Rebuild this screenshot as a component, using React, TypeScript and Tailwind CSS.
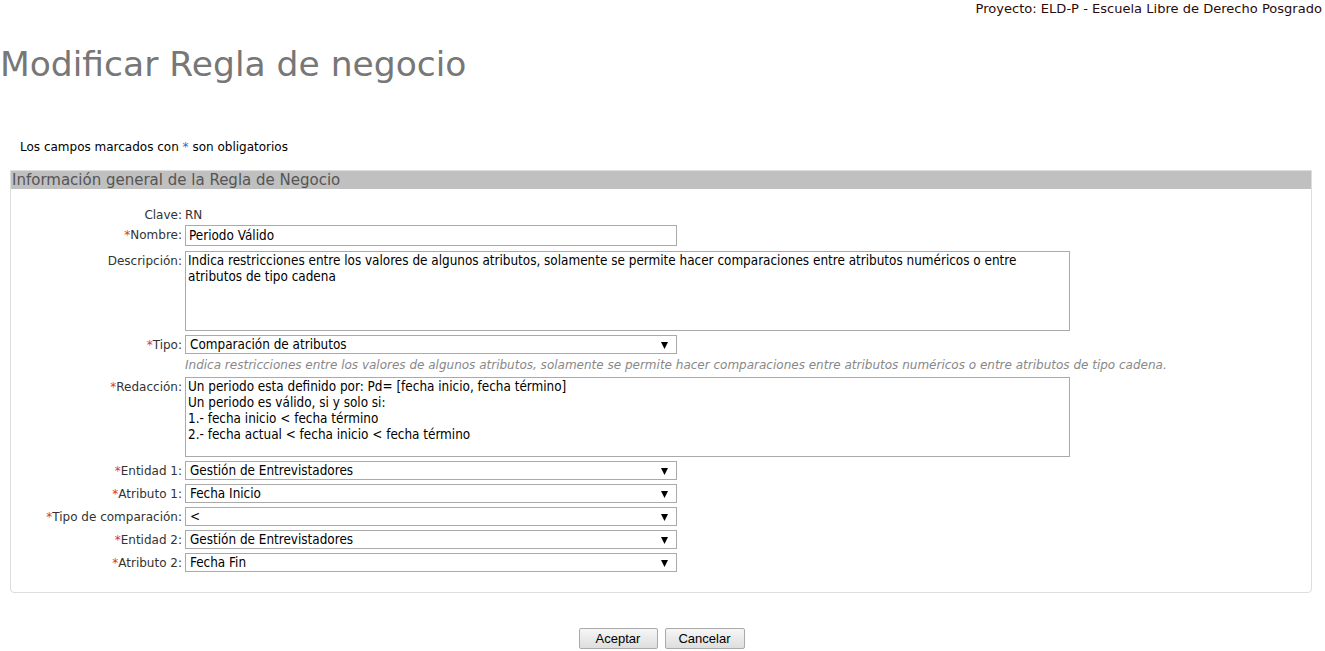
const LABEL_FONT = "font-['Verdana','DejaVu_Sans',sans-serif]";
const FIELD_FONT = "font-['DejaVu_Sans_Condensed','DejaVu_Sans',sans-serif]";

function Label({ text, required }: { text: string; required?: boolean }) {
  return (
    <div className="w-[171px] shrink-0 text-right text-[12px] leading-[16px] text-[#333] pt-[2px]">
      {required && <span className="text-[#d33]">*</span>}
      {text}:
    </div>
  );
}

function Row({ label, required, children, className = "" }: { label: string; required?: boolean; children: React.ReactNode; className?: string }) {
  return (
    <div className={`flex items-start gap-[3px] ${className}`}>
      <Label text={label} required={required} />
      <div className="flex-1">{children}</div>
    </div>
  );
}

function Select({ value }: { value: string }) {
  return (
    <div className={`relative w-[492px] h-[19px] border border-[#aaa] bg-white ${FIELD_FONT} text-[13.4px] leading-[17px] text-black pl-[4px]`}>
      {value}
      <svg className="absolute right-[8px] top-[6px]" width="7" height="7" viewBox="0 0 7 7" aria-hidden="true">
        <path d="M0 0h7L3.5 7z" fill="#000" />
      </svg>
    </div>
  );
}

function TextArea({ lines }: { lines: string[] }) {
  return (
    <div className={`w-[885px] h-[80px] border border-[#aaa] bg-white ${FIELD_FONT} text-[13.4px] leading-[16px] text-black px-[2px] pt-[1px]`}>
      {lines.map((l) => (
        <div key={l}>{l}</div>
      ))}
    </div>
  );
}

export default function App() {
  return (
    <div className={`w-[1325px] h-[651px] bg-white ${LABEL_FONT} overflow-hidden`}>
      <div className="text-right text-[13.05px] leading-[16px] text-[#2a0a0a] pt-[1px] pr-[3px]">
        Proyecto: ELD-P - Escuela Libre de Derecho Posgrado
      </div>
      <h1 className="text-[34.5px] leading-[44px] text-[#777] mt-[25px]">Modificar Regla de negocio</h1>
      <p className="text-[12px] leading-[16px] text-black ml-[20px] mt-[53px]">
        Los campos marcados con <span className="text-[#36c]">*</span> son obligatorios
      </p>
      <div className="mx-[10px] w-[1302px] mt-[15px] border border-[#ddd] rounded-b-[4px] pb-[20px]">
        <div className="bg-[#c0c0c0] h-[18px] text-[15px] leading-[18px] text-[#555] pl-[1px]">
          Información general de la Regla de Negocio
        </div>
        <div className="pt-[16px]">
          <Row label="Clave">
            <div className="text-[12px] leading-[16px] text-[#333] pt-[2px]">RN</div>
          </Row>
          <Row label="Nombre" required className="mt-[2px]">
            <div className={`w-[492px] h-[21px] border border-[#aaa] ${FIELD_FONT} text-[13.4px] leading-[19px] text-black pl-[3px]`}>
              Periodo Válido
            </div>
          </Row>
          <Row label="Descripción" className="mt-[5px]">
            <TextArea
              lines={[
                "Indica restricciones entre los valores de algunos atributos, solamente se permite hacer comparaciones entre atributos numéricos o entre",
                "atributos de tipo cadena",
              ]}
            />
          </Row>
          <Row label="Tipo" required className="mt-[4px]">
            <Select value="Comparación de atributos" />
            <div className="text-[12px] leading-[16px] italic text-[#888] mt-[3px]">
              Indica restricciones entre los valores de algunos atributos, solamente se permite hacer comparaciones entre atributos numéricos o entre atributos de tipo cadena.
            </div>
          </Row>
          <Row label="Redacción" required className="mt-[4px]">
            <TextArea
              lines={[
                "Un periodo esta definido por: Pd= [fecha inicio, fecha término]",
                "Un periodo es válido, si y solo si:",
                "1.- fecha inicio < fecha término",
                "2.- fecha actual < fecha inicio < fecha término",
              ]}
            />
          </Row>
          <div className="flex flex-col gap-[4px] mt-[4px]">
            <Row label="Entidad 1" required>
              <Select value="Gestión de Entrevistadores" />
            </Row>
            <Row label="Atributo 1" required>
              <Select value="Fecha Inicio" />
            </Row>
            <Row label="Tipo de comparación" required>
              <Select value="<" />
            </Row>
            <Row label="Entidad 2" required>
              <Select value="Gestión de Entrevistadores" />
            </Row>
            <Row label="Atributo 2" required>
              <Select value="Fecha Fin" />
            </Row>
          </div>
        </div>
      </div>
      <div className="flex justify-center gap-[7px] mt-[35px] pr-[2px]">
        <button className="w-[79px] h-[21px] border border-[#aaa] rounded-[2px] bg-gradient-to-b from-[#f6f6f6] to-[#dedede] font-['Liberation_Sans',Arial,sans-serif] text-[13px] text-black">
          Aceptar
        </button>
        <button className="w-[80px] h-[21px] border border-[#aaa] rounded-[2px] bg-gradient-to-b from-[#f6f6f6] to-[#dedede] font-['Liberation_Sans',Arial,sans-serif] text-[13px] text-black">
          Cancelar
        </button>
      </div>
    </div>
  );
}
